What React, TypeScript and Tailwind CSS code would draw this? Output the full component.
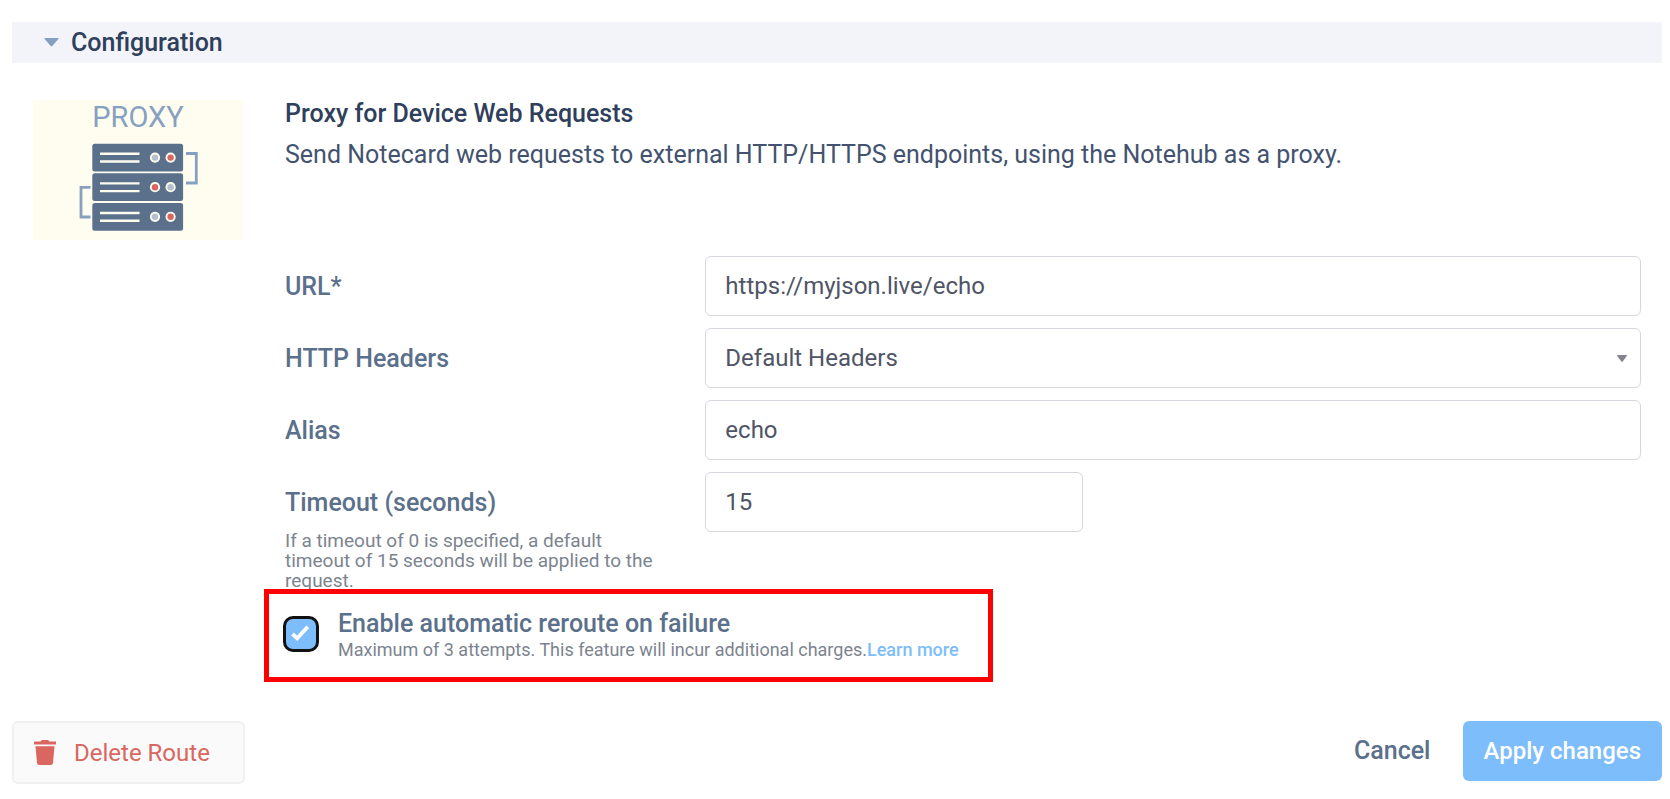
import type { ReactNode } from "react";

const labelText = "text-[25px] leading-8 font-medium text-[#5b708b]";
const fieldBox =
  "block h-[60px] w-full appearance-none rounded-md border border-[#d5d7de] bg-white px-[19px] text-2xl text-[#4f5566] outline-none";

function ProxyLogo() {
  const units = [
    { y: 44, left: "#b4c0cb", right: "#d9665f" },
    { y: 73.6, left: "#d9665f", right: "#b4c0cb" },
    { y: 103.2, left: "#b4c0cb", right: "#d9665f" },
  ];
  return (
    <svg viewBox="0 0 210 140" className="h-[140px] w-[210px] shrink-0" role="img" aria-label="Proxy">
      <rect width="210" height="140" fill="#fefdf0" />
      <text x="105" y="27" textAnchor="middle" fontSize="29" fill="#87a0c0" fontFamily="Roboto, sans-serif">
        PROXY
      </text>
      <path d="M153 53.5h10.3v29.5H153M57.5 87.3H48v29.7h9.5" fill="none" stroke="#87a0c0" strokeWidth="2.8" />
      {units.map((u) => (
        <g key={u.y}>
          <rect x="59.3" y={u.y - 0.3} width="90.8" height="27.8" rx="2.5" fill="#5b708b" />
          <path d={`M67 ${u.y + 9.8}h39.5M67 ${u.y + 17.5}h39.5`} stroke="#fefdf0" strokeWidth="2.4" />
          <circle cx="122" cy={u.y + 13.6} r="5.1" fill="#fefdf0" />
          <circle cx="122" cy={u.y + 13.6} r="3.2" fill={u.left} />
          <circle cx="137.6" cy={u.y + 13.6} r="5.1" fill="#fefdf0" />
          <circle cx="137.6" cy={u.y + 13.6} r="3.2" fill={u.right} />
        </g>
      ))}
    </svg>
  );
}

function Row({ id, label, help, children }: { id: string; label: string; help?: string; children: ReactNode }) {
  return (
    <div className="grid grid-cols-[31%_1fr]">
      <div className="pt-[15px] pr-10">
        <label htmlFor={id} className={`block ${labelText}`}>
          {label}
        </label>
        {help && <p className="pt-3 text-[19px] leading-5 text-[#7c8490]">{help}</p>}
      </div>
      <div>{children}</div>
    </div>
  );
}

export default function App() {
  return (
    <main className="bg-white pt-[22px] pr-2 pb-[14px] pl-3 font-[Roboto,sans-serif]">
      <h2>
        <button
          type="button"
          aria-expanded="true"
          className="flex h-[41px] w-full items-center gap-3 bg-[#f3f4f9] pl-8 text-[25px] font-medium text-[#2e405b]"
        >
          <svg viewBox="0 0 15 9" className="h-[9px] w-[15px]" aria-hidden="true">
            <path d="M1 0h13q1 0 .4 1L8.3 8q-.8.8-1.6 0L.6 1Q0 0 1 0Z" fill="#87a0c0" />
          </svg>
          Configuration
        </button>
      </h2>

      <section className="flex gap-[42px] pt-[37px] pr-[21px] pl-[21px]">
        <ProxyLogo />
        <div className="min-w-0 flex-1">
          <h3 className="text-[25px] leading-7 font-medium text-[#2e405b]">Proxy for Device Web Requests</h3>
          <p className="pt-[13px] pb-[87px] text-[25px] leading-7 text-[#43536f]">
            Send Notecard web requests to external HTTP/HTTPS endpoints, using the Notehub as a proxy.
          </p>

          <form className="flex flex-col gap-3">
            <Row id="url" label="URL*">
              <input id="url" type="text" defaultValue="https://myjson.live/echo" className={fieldBox} />
            </Row>
            <Row id="headers" label="HTTP Headers">
              <div className="relative">
                <select id="headers" className={fieldBox}>
                  <option>Default Headers</option>
                </select>
                <svg
                  viewBox="0 0 10 7"
                  className="pointer-events-none absolute top-[27px] right-[14px] h-[7px] w-[10px]"
                  aria-hidden="true"
                >
                  <path d="M.6 0h8.8q.8.3.4 1L5.7 6.5q-.7.7-1.4 0L.2 1Q-.2.3.6 0Z" fill="#85838d" />
                </svg>
              </div>
            </Row>
            <Row id="alias" label="Alias">
              <input id="alias" type="text" defaultValue="echo" className={fieldBox} />
            </Row>
            <Row
              id="timeout"
              label="Timeout (seconds)"
              help="If a timeout of 0 is specified, a default timeout of 15 seconds will be applied to the request."
            >
              <div className="w-[378px] max-w-full">
                <input id="timeout" type="text" inputMode="numeric" defaultValue="15" className={fieldBox} />
              </div>
            </Row>
          </form>

          <div className="relative -mt-[2px] -ml-[21px] flex h-[93px] w-[729px] gap-[19px] border-[5px] border-[#ff0000] pt-4 pl-[14px]">
            <span className="relative mt-[6px] h-9 w-9 shrink-0">
              <input
                id="reroute"
                type="checkbox"
                defaultChecked
                className="block h-9 w-9 appearance-none rounded-[10px] border-[3px] border-[#111111] bg-[#7dbdfb]"
              />
              <svg viewBox="0 0 36 36" className="pointer-events-none absolute inset-0" aria-hidden="true">
                <path d="m9.5 18 4.7 4.300 10.600-11.600" fill="none" stroke="#ffffff" strokeWidth="3.8" />
              </svg>
            </span>
            <div>
              <label htmlFor="reroute" className="block text-[25px] leading-7 font-medium text-[#5b708b]">
                Enable automatic reroute on failure
              </label>
              <p className="text-lg leading-6 whitespace-nowrap text-[#7c8490]">
                Maximum of 3 attempts. This feature will incur additional charges.
                <a href="#learn-more" className="font-medium text-[#7dbdfb]">
                  Learn more
                </a>
              </p>
            </div>
          </div>
        </div>
      </section>

      <footer className="flex items-start pt-[39px]">
        <button
          type="button"
          className="flex h-[63px] items-center gap-[18px] rounded-md border-2 border-[#f0f0f2] bg-[#fafafa] pr-[33px] pl-5 text-2xl text-[#d9665f]"
        >
          <svg viewBox="0 0 22 25" className="h-[25px] w-[22px]" aria-hidden="true">
            <path
              d="M0 1.500h6.500L8 0h6l1.500 1.500H22v3H0ZM1.500 6.300h19l-1.500 16.700q-.3 2-2.300 2H5.300q-2 0-2.300-2Z"
              fill="#d9665f"
            />
          </svg>
          Delete Route
        </button>
        <div className="ml-auto flex gap-8">
          <button type="button" className="h-[60px] text-[25px] font-medium text-[#5b708b]">
            Cancel
          </button>
          <button type="button" className="h-[60px] rounded-md bg-[#7dbdfb] px-[21px] text-2xl font-medium text-white">
            Apply changes
          </button>
        </div>
      </footer>
    </main>
  );
}
